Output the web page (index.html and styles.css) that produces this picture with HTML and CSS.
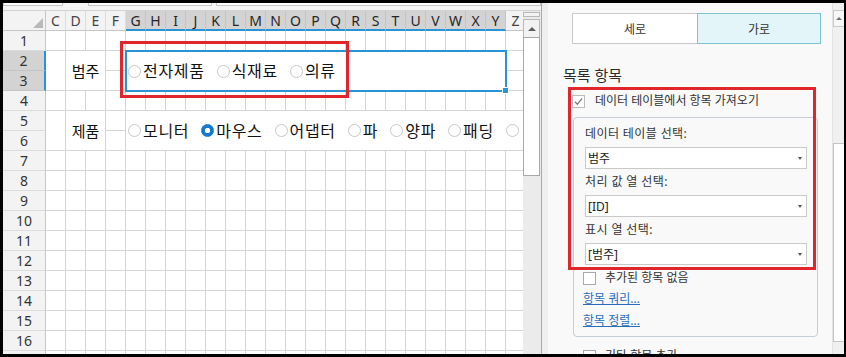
FILE: index.html
```html
<!DOCTYPE html>
<html lang="ko">
   <head>
      <meta charset="UTF-8">
      <meta name="viewport" content="width=device-width, initial-scale=1.0">
      <title>목록 항목</title>
      <link rel="stylesheet" href="styles.css">
   </head>
   <body>
      <div class="window">
         <div class="book">
            <div class="formula-strip">
               <span class="fbox name-box"></span>
               <span class="fbox fx-box"></span>
               <span class="fbox input-box"></span>
            </div>
            <div class="book-body">
               <div class="sheet-view">
                  <div class="sheet">
                     <div class="corner"><span class="corner-tri"></span></div>
                     <div class="colhead">C</div>
                     <div class="colhead">D</div>
                     <div class="colhead">E</div>
                     <div class="colhead">F</div>
                     <div class="colhead sel">G</div>
                     <div class="colhead sel">H</div>
                     <div class="colhead sel">I</div>
                     <div class="colhead sel">J</div>
                     <div class="colhead sel">K</div>
                     <div class="colhead sel">L</div>
                     <div class="colhead sel">M</div>
                     <div class="colhead sel">N</div>
                     <div class="colhead sel">O</div>
                     <div class="colhead sel">P</div>
                     <div class="colhead sel">Q</div>
                     <div class="colhead sel">R</div>
                     <div class="colhead sel">S</div>
                     <div class="colhead sel">T</div>
                     <div class="colhead sel">U</div>
                     <div class="colhead sel">V</div>
                     <div class="colhead sel">W</div>
                     <div class="colhead sel">X</div>
                     <div class="colhead sel">Y</div>
                     <div class="colhead">Z</div>

                     <div class="rowhead">1</div>
                     <div class="rowhead sel">2</div>
                     <div class="rowhead sel">3</div>
                     <div class="rowhead">4</div>
                     <div class="rowhead">5</div>
                     <div class="rowhead">6</div>
                     <div class="rowhead">7</div>
                     <div class="rowhead">8</div>
                     <div class="rowhead">9</div>
                     <div class="rowhead">10</div>
                     <div class="rowhead">11</div>
                     <div class="rowhead">12</div>
                     <div class="rowhead">13</div>
                     <div class="rowhead">14</div>
                     <div class="rowhead">15</div>
                     <div class="rowhead">16</div>
                     <div class="rowhead"></div>

                     <!-- merged cells -->
                     <div class="cell col-c r23"></div>
                     <div class="cell label-cell col-de r23">범주</div>
                     <div class="combo col-gy r23">
                        <span class="opt"><i class="dot"></i>전자제품</span>
                        <span class="opt"><i class="dot"></i>식재료</span>
                        <span class="opt"><i class="dot"></i>의류</span>
                        <span class="handle"></span>
                     </div>

                     <div class="cell col-c r56"></div>
                     <div class="cell label-cell col-de r56">제품</div>
                     <div class="cell radios col-gz r56">
                        <span class="opt"><i class="dot"></i>모니터</span>
                        <span class="opt"><i class="dot on"></i>마우스</span>
                        <span class="opt"><i class="dot"></i>어댑터</span>
                        <span class="opt"><i class="dot"></i>파</span>
                        <span class="opt"><i class="dot"></i>양파</span>
                        <span class="opt"><i class="dot"></i>패딩</span>
                        <span class="opt"><i class="dot"></i></span>
                     </div>
                  </div>
                  <div class="note-box sheet-note"></div>
               </div>
               <div class="vscroll">
                  <div class="split-box"></div>
                  <div class="sb-up"><i class="arrow-up"></i></div>
                  <div class="sb-thumb"></div>
               </div>
            </div>
         </div>

         <div class="splitter"></div>

         <div class="panel">
            <div class="toggle">
               <div class="tbtn vert">세로</div>
               <div class="tbtn horiz">가로</div>
            </div>

            <div class="heading">목록 항목</div>

            <div class="chk-row main-chk">
               <span class="box"><svg width="11" height="11" viewBox="0 0 11 11"><path d="M2 5.8 L4.4 8.3 L9 2.4" fill="none" stroke="#7c7c7c" stroke-width="1.3"/></svg></span>
               <span>데이터 테이블에서 항목 가져오기</span>
            </div>

            <div class="group">
               <div class="field-label">데이터 테이블 선택:</div>
               <div class="select"><span>범주</span><i class="caret"></i></div>
               <div class="field-label">처리 값 열 선택:</div>
               <div class="select"><span>[ID]</span><i class="caret"></i></div>
               <div class="field-label">표시 열 선택:</div>
               <div class="select"><span>[범주]</span><i class="caret"></i></div>

               <div class="chk-row sub-chk">
                  <span class="box"></span>
                  <span>추가된 항목 없음</span>
               </div>
               <a class="link first" href="#">항목 쿼리...</a>
               <a class="link" href="#">항목 정렬...</a>
            </div>

            <div class="chk-row sub-chk last-chk">
               <span class="box"></span>
               <span>기타 항목 추가</span>
            </div>

            <div class="note-box panel-note"></div>
         </div>

         <div class="pscroll">
            <div class="ps-up"><i class="arrow-up small"></i></div>
            <div class="ps-thumb"></div>
         </div>
      </div>
   </body>
</html>
```

FILE: styles.css
```css
html, body{
margin: 0;
}
body{
width: 846px;
height: 357px;
overflow: hidden;
background: #000;
font-family: "Noto Sans", "Noto Sans CJK KR", sans-serif;
}
.window{
display: flex;
height: 351px;
margin: 3px 2px 0 3px;
background: #f9f9f9;
overflow: hidden;
}

/* workbook side */
.book{
width: 538px;
flex: none;
display: flex;
flex-direction: column;
background: #fff;
}
.formula-strip{
height: 7px;
display: flex;
align-items: flex-start;
background: #f5f5f5;
border-bottom: 1px solid #d2d2d2;
}
.fbox{
height: 2px;
background: #fff;
border: 1px solid #c7c7c7;
border-top: none;
}
.name-box{
width: 58px;
}
.fx-box{
width: 122px;
margin-left: 25px;
}
.input-box{
flex: 1;
margin-left: 4px;
}
.book-body{
flex: 1;
display: flex;
min-height: 0;
}
.sheet-view{
width: 520px;
flex: none;
position: relative;
overflow: hidden;
}
.sheet{
width: 523px;
display: grid;
grid-template-columns: 43px repeat(24, 20px);
grid-template-rows: repeat(18, 20px);
background-color: #fff;
background-image: linear-gradient(to right, transparent 19px, #d4d4d4 19px), linear-gradient(to bottom, transparent 19px, #d4d4d4 19px);
background-size: 20px 100%, 100% 20px;
background-position: 3px 0, 0 0;
}
.corner{
grid-row: 1;
display: flex;
justify-content: flex-end;
align-items: flex-end;
padding: 0 2px 2px 0;
background: #f3f3f3;
border-right: 1px solid #c6c6c6;
border-bottom: 1px solid #c6c6c6;
}
.corner-tri{
width: 0;
height: 0;
border-left: 10px solid transparent;
border-bottom: 10px solid #b9b9b9;
}
.colhead{
grid-row: 1;
font-size: 14px;
line-height: 20px;
text-align: center;
color: #444;
background: #f3f3f3;
border-right: 1px solid #dcdcdc;
border-bottom: 1px solid #c6c6c6;
}
.colhead.sel{
background: #d3d3d3;
color: #262626;
border-right-color: #c4c4c4;
border-bottom: 2px solid #2a93d5;
}
.rowhead{
grid-column: 1;
font-size: 14px;
line-height: 20px;
text-align: center;
color: #333;
background: #f3f3f3;
border-right: 1px solid #c6c6c6;
border-bottom: 1px solid #dcdcdc;
}
.rowhead.sel{
background: #d3d3d3;
border-right: 2px solid #2a93d5;
border-bottom-color: #c4c4c4;
}
.corner, .colhead, .rowhead, .cell, .combo{
box-sizing: border-box;
}
.cell{
background: #fff;
border-right: 1px solid #d4d4d4;
border-bottom: 1px solid #d4d4d4;
}
.r23{
grid-row: 3 / 5;
}
.r56{
grid-row: 6 / 8;
}
.col-c{
grid-column: 2 / 3;
}
.col-de{
grid-column: 3 / 5;
}
.col-gy{
grid-column: 6 / 25;
}
.col-gz{
grid-column: 6 / 26;
}
.label-cell{
display: flex;
align-items: center;
justify-content: center;
font-size: 15px;
color: #111;
}
.combo, .radios{
display: flex;
align-items: center;
gap: 12px;
padding-left: 2px;
overflow: hidden;
}
.combo{
position: relative;
overflow: visible;
background: #fff;
box-shadow: 0 0 0 1px #2a93d5, inset 0 0 0 1px #2a93d5;
}
.radios{
border-right: none;
}
.handle{
position: absolute;
right: -3px;
bottom: -3px;
width: 5px;
height: 5px;
background: #2a93d5;
border: 1px solid #fff;
}
.opt{
display: flex;
align-items: center;
gap: 2px;
font-size: 16px;
letter-spacing: 0.7px;
line-height: 20px;
color: #111;
white-space: nowrap;
}
.dot{
width: 13px;
height: 13px;
flex: none;
box-sizing: border-box;
border: 1px solid #c8c8c8;
border-radius: 50%;
background: #fff;
}
.dot.on{
border-color: #1279cf;
background: radial-gradient(circle, #fff 0 2.4px, #1279cf 3px);
}
.note-box{
position: absolute;
border: 3px solid #e0252b;
box-sizing: border-box;
}
.sheet-note{
left: 117px;
top: 30px;
width: 229px;
height: 57px;
}

/* sheet scroll bar */
.vscroll{
width: 18px;
flex: none;
display: flex;
flex-direction: column;
padding: 1px 1px 0 0;
box-sizing: border-box;
background: #ebebeb;
}
.split-box{
height: 3px;
border: 1px solid #b8b8b8;
background: #f3f3f3;
}
.sb-up{
height: 17px;
margin-top: 2px;
display: flex;
align-items: center;
justify-content: center;
border: 1px solid #b8b8b8;
background: #f2f2f2;
}
.arrow-up{
width: 0;
height: 0;
border-left: 4px solid transparent;
border-right: 4px solid transparent;
border-bottom: 4px solid #5f5f5f;
}
.arrow-up.small{
border-left-width: 3px;
border-right-width: 3px;
border-bottom: 3px solid #707070;
}
.sb-thumb{
height: 137px;
margin-top: -1px;
border: 1px solid #a8a8a8;
background: #fff;
}
.splitter{
width: 7px;
flex: none;
box-sizing: border-box;
background: #efefef;
border-left: 1px solid #a9a9a9;
}

/* task pane */
.panel{
width: 284px;
flex: none;
position: relative;
overflow: hidden;
padding-top: 10px;
box-sizing: border-box;
font-size: 12px;
color: #333;
}
.toggle{
display: flex;
margin-left: 24px;
height: 31px;
}
.tbtn{
display: flex;
align-items: center;
justify-content: center;
box-sizing: border-box;
font-size: 12px;
color: #333;
}
.vert{
width: 126px;
background: #fff;
border: 1px solid #c9c9c9;
}
.horiz{
width: 124px;
margin-left: -1px;
background: #e4f5fa;
border: 1px solid #80c3d2;
}
.heading{
margin: 21px 0 0 15px;
font-size: 15px;
line-height: 20px;
color: #2b2b2b;
}
.chk-row{
display: flex;
align-items: center;
height: 16px;
line-height: 16px;
white-space: nowrap;
}
.main-chk{
margin: 8px 0 0 24px;
gap: 10px;
}
.box{
width: 13px;
height: 13px;
flex: none;
display: flex;
align-items: center;
justify-content: center;
box-sizing: border-box;
border: 1px solid #a9a9a9;
background: #fff;
}
.main-chk .box{
border-color: #bcbcbc;
}
.group{
width: 245px;
margin: 8px 0 0 25px;
padding: 8px 10px 4px 11px;
box-sizing: border-box;
border: 1px solid #c6cdd7;
border-radius: 4px;
}
.field-label{
line-height: 16px;
letter-spacing: 0.4px;
}
.select{
height: 22px;
margin: 5px 0;
display: flex;
align-items: center;
justify-content: space-between;
padding: 0 4px 0 2px;
box-sizing: border-box;
border: 1px solid #c9c9c9;
background: #fff;
color: #222;
}
.caret{
width: 0;
height: 0;
border-left: 2.5px solid transparent;
border-right: 2.5px solid transparent;
border-top: 3px solid #555;
}
.sub-chk{
gap: 9px;
margin: 3px 0 0 -2px;
}
.link{
display: block;
width: max-content;
margin-left: -2px;
line-height: 22px;
color: #2a6ebb;
text-decoration: underline;
}
.link.first{
margin-top: 2px;
}
.last-chk{
margin: 11px 0 0 35px;
}
.panel-note{
left: 20px;
top: 84px;
width: 248px;
height: 183px;
}
.pscroll{
width: 12px;
flex: none;
box-sizing: border-box;
border-left: 1px solid #e3e3e3;
background: #f0f0f0;
}
.ps-up{
height: 17px;
margin-top: 7px;
display: flex;
align-items: center;
justify-content: center;
box-sizing: border-box;
border: 1px solid #c9c9c9;
border-right: none;
background: #f7f7f7;
}
.ps-thumb{
height: 199px;
margin-top: 116px;
box-sizing: border-box;
border: 1px solid #c4c4c4;
border-right: none;
background: #fff;
}
```
